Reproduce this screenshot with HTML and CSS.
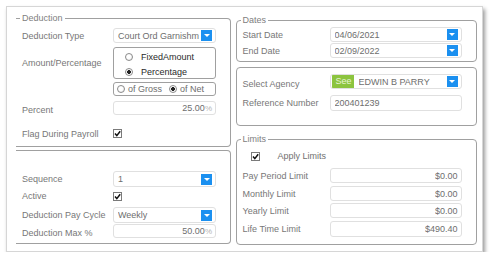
FILE: index.html
```html
<!DOCTYPE html>
<html>
<head>
<meta charset="utf-8">
<link rel="stylesheet" href="styles.css">
</head>
<body>
<div class="card">
  <div class="col left">
    <div class="box ded">
      <div class="legend">Deduction</div>
      <div class="row r-type">
        <span class="lbl">Deduction Type</span>
        <div class="field select h15"><span class="val">Court Ord Garnishm</span><span class="btn"><i></i></span></div>
      </div>
      <div class="row r-amt">
        <span class="lbl">Amount/Percentage</span>
        <div class="radiobox">
          <div class="radio"><span class="rc"></span>FixedAmount</div>
          <div class="radio"><span class="rc on"></span>Percentage</div>
        </div>
      </div>
      <div class="row r-gn">
        <span></span>
        <div class="gnbox">
          <span class="rc"></span><span class="gt">of Gross</span>
          <span class="rc on gap"></span><span class="gt">of Net</span>
        </div>
      </div>
      <div class="row r-pct">
        <span class="lbl">Percent</span>
        <div class="field num h14"><span class="val">25.00</span><span class="pc">%</span></div>
      </div>
      <div class="row r-flag">
        <span class="lbl">Flag During Payroll</span>
        <span class="chk"><svg width="9" height="9" viewBox="0 0 9 9"><rect x=".5" y=".5" width="8" height="8" fill="#fff" stroke="#7a7a7a"/><path d="M2 4.6 L3.8 6.6 L7.2 2.2" stroke="#111" stroke-width="1.5" fill="none"/></svg></span>
      </div>
    </div>
    <div class="box misc">
      <div class="row r-seq">
        <span class="lbl">Sequence</span>
        <div class="field select h16"><span class="val">1</span><span class="btn"><i></i></span></div>
      </div>
      <div class="row r-act">
        <span class="lbl">Active</span>
        <span class="chk"><svg width="9" height="9" viewBox="0 0 9 9"><rect x=".5" y=".5" width="8" height="8" fill="#fff" stroke="#7a7a7a"/><path d="M2 4.6 L3.8 6.6 L7.2 2.2" stroke="#111" stroke-width="1.5" fill="none"/></svg></span>
      </div>
      <div class="row r-cyc">
        <span class="lbl">Deduction Pay Cycle</span>
        <div class="field select h16"><span class="val">Weekly</span><span class="btn"><i></i></span></div>
      </div>
      <div class="row r-max">
        <span class="lbl low">Deduction Max %</span>
        <div class="field num h14"><span class="val">50.00</span><span class="pc">%</span></div>
      </div>
    </div>
  </div>

  <div class="col right">
    <div class="box dates">
      <div class="legend">Dates</div>
      <div class="row r-start">
        <span class="lbl">Start Date</span>
        <div class="field select h15"><span class="val">04/06/2021</span><span class="btn"><i></i></span></div>
      </div>
      <div class="row r-end">
        <span class="lbl">End Date</span>
        <div class="field select h15"><span class="val">02/09/2022</span><span class="btn"><i></i></span></div>
      </div>
    </div>
    <div class="box agency">
      <div class="row r-ag">
        <span class="lbl low">Select Agency</span>
        <div class="field select h15"><span class="see">See</span><span class="val ag">EDWIN B PARRY</span><span class="btn"><i></i></span></div>
      </div>
      <div class="row r-ref">
        <span class="lbl">Reference Number</span>
        <div class="field h16"><span class="val">200401239</span></div>
      </div>
    </div>
    <div class="box limits">
      <div class="legend">Limits</div>
      <div class="apply">
        <span class="chk"><svg width="9" height="9" viewBox="0 0 9 9"><rect x=".5" y=".5" width="8" height="8" fill="#fff" stroke="#7a7a7a"/><path d="M2 4.6 L3.8 6.6 L7.2 2.2" stroke="#111" stroke-width="1.5" fill="none"/></svg></span>
        <span class="atext">Apply Limits</span>
      </div>
      <div class="row r-pp">
        <span class="lbl">Pay Period Limit</span>
        <div class="field num h15"><span class="val">$0.00</span></div>
      </div>
      <div class="row r-mo">
        <span class="lbl">Monthly Limit</span>
        <div class="field num h15"><span class="val">$0.00</span></div>
      </div>
      <div class="row r-yr">
        <span class="lbl">Yearly Limit</span>
        <div class="field num h15"><span class="val">$0.00</span></div>
      </div>
      <div class="row r-lt">
        <span class="lbl">Life Time Limit</span>
        <div class="field num h16"><span class="val">$490.40</span></div>
      </div>
    </div>
  </div>
</div>
</body>
</html>
```

FILE: styles.css
```css
* { box-sizing: border-box; }
body {
  margin: 0;
  background: #fff;
  font-family: "Liberation Sans", Arial, sans-serif;
  font-size: 9px;
  color: #777;
}
.card {
  margin: 6px 0 0 6px;
  width: 477px;
  border: 1px solid #d6d6d6;
  box-shadow: 2px 3px 4px rgba(0, 0, 0, 0.4);
  padding: 11px 5px 6px 9px;
  display: flex;
  gap: 5px;
  align-items: flex-start;
  background: #fff;
}
.col { display: flex; flex-direction: column; }
.left { width: 215px; }
.right { width: 242px; padding-top: 2px; }

.box {
  border: 1px solid #a0a0a0;
  border-radius: 4px;
  padding-left: 6px;
}
.left .box {
  border-left: none;
  border-radius: 0 4px 4px 0;
}
.legend {
  display: table;
  margin: -6px 0 0 -2px;
  padding: 0 2px;
  background: #fff;
  line-height: 10px;
  color: #808080;
}

.row { display: grid; align-items: center; }
.left .row { grid-template-columns: 91px 103px; }
.right .row { grid-template-columns: 87px 132px; }
.lbl { line-height: 10px; white-space: nowrap; }
.lbl.low { padding-top: 4px; }

.field {
  display: flex;
  align-items: center;
  border: 1px solid #e0e0e0;
  border-radius: 3px;
  background: #fff;
  padding: 0 3px 0 4px;
  color: #6e6e6e;
  white-space: nowrap;
  overflow: hidden;
}
.h14 { height: 14px; }
.h15 { height: 15px; }
.h16 { height: 16px; }
.field .val { flex: 1; overflow: hidden; }
.field.num { justify-content: flex-end; padding-right: 3px; }
.field.num .val { flex: none; }
.pc { color: #b5b5b5; font-size: 8px; }

.btn {
  width: 11px;
  height: 11px;
  background: #1b90f0;
  display: flex;
  align-items: center;
  justify-content: center;
  flex: none;
}
.btn i {
  width: 0;
  height: 0;
  border-left: 3px solid transparent;
  border-right: 3px solid transparent;
  border-top: 3px solid #fff;
}
.see {
  background: #8cc43f;
  color: #e8f5d6;
  height: 13px;
  width: 22px;
  margin-left: -3px;
  padding-left: 4px;
  line-height: 13px;
  flex: none;
}
.val.ag { margin-left: 5px; }

.radiobox {
  height: 32px;
  border: 1px solid #a0a0a0;
  border-radius: 3px;
  padding: 3px 0 0 11px;
  display: flex;
  flex-direction: column;
  gap: 3px;
  color: #2a2a2a;
}
.radio {
  height: 12px;
  display: flex;
  align-items: center;
  gap: 8px;
}
.rc {
  width: 8px;
  height: 8px;
  border-radius: 50%;
  border: 1px solid #8a8a8a;
  background: radial-gradient(circle at 40% 40%, #fff 0 40%, #e4e4e4 100%);
  flex: none;
}
.rc.on {
  background: radial-gradient(circle, #222 0 1.6px, #fff 2.2px);
}
.gnbox {
  height: 14px;
  border: 1px solid #a0a0a0;
  border-radius: 3px;
  display: flex;
  align-items: center;
  padding-left: 3px;
  color: #6e6e6e;
}
.gt { margin-left: 3px; }
.rc.gap { margin-left: 7px; }

.chk { display: flex; height: 9px; }
.chk svg { display: block; }

/* deduction box rows */
.ded .r-type { margin-top: 5px; }
.ded .r-amt { margin-top: 4px; }
.ded .r-gn { margin-top: 3px; }
.ded .r-pct { margin-top: 5px; }
.ded .r-pct .lbl { padding-top: 4px; }
.ded .r-flag { margin-top: 13px; height: 11px; }
.ded { padding-bottom: 7px; }

.misc { margin-top: 3px; padding-top: 20px; padding-bottom: 5px; }
.misc .r-act { margin-top: 4px; height: 10px; }
.misc .r-cyc { margin-top: 6px; }
.misc .r-max { margin-top: 1px; }

.dates .r-start { margin-top: 2px; }
.dates .r-end { margin-top: 1px; }
.dates { padding-bottom: 3px; }

.agency { margin-top: 5px; padding-top: 6px; padding-bottom: 14px; }
.agency .r-ref { margin-top: 6px; }

.limits { margin-top: 13px; padding-bottom: 7px; }
.apply {
  margin-top: 7px;
  height: 10px;
  display: flex;
  align-items: center;
  padding-left: 8px;
}
.atext { margin-left: 18px; color: #707070; }
.limits .r-pp { margin-top: 7px; }
.limits .r-mo { margin-top: 3px; }
.limits .r-yr { margin-top: 2px; }
.limits .r-lt { margin-top: 3px; }
```
